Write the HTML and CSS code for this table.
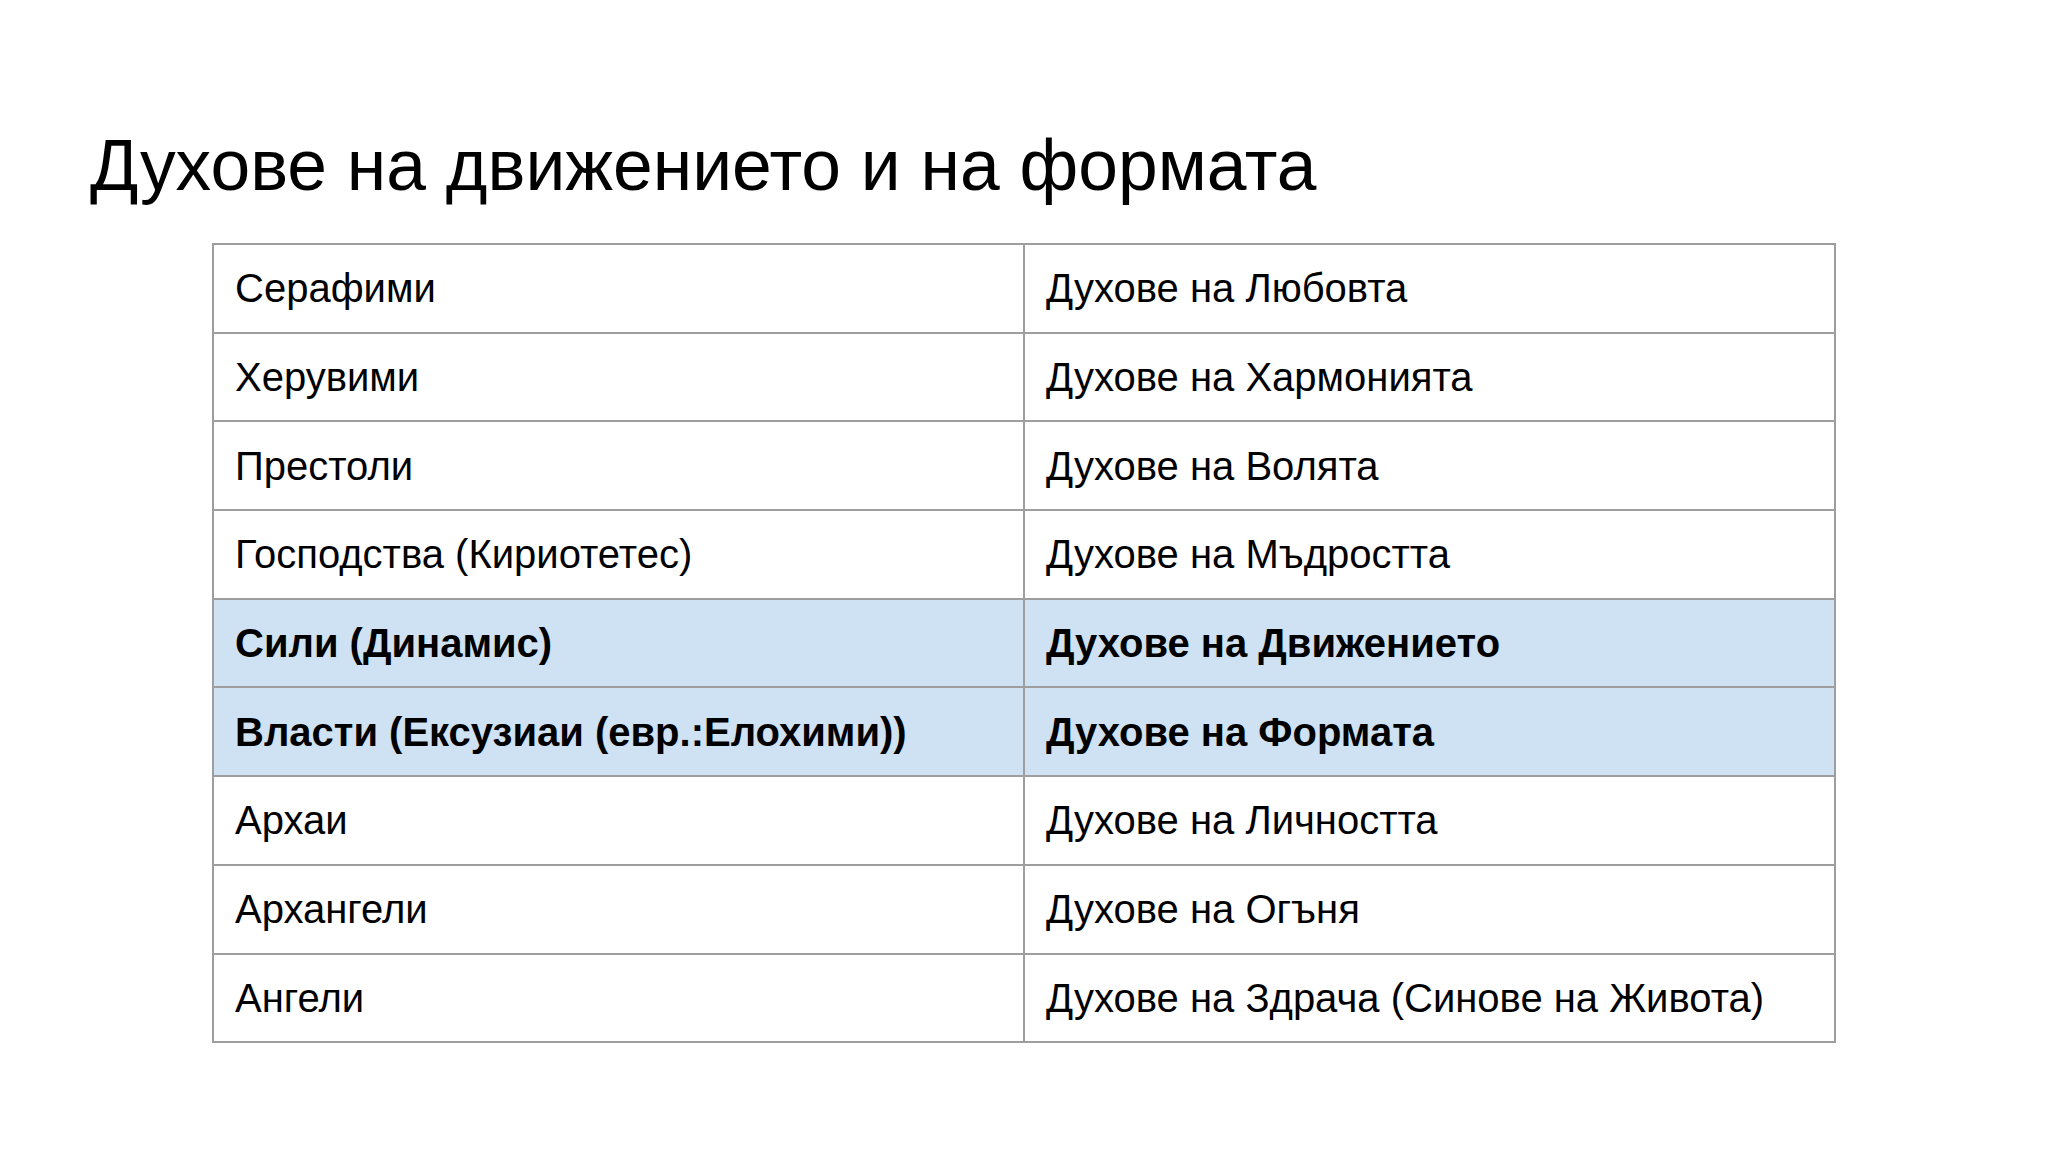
FILE: index.html
```html
<!DOCTYPE html>
<html lang="bg">
<head>
<meta charset="utf-8">
<title>Духове на движението и на формата</title>
<link rel="stylesheet" href="styles.css">
</head>
<body>
<main class="slide">
  <h1 class="title">Духове на движението и на формата</h1>
  <table class="hierarchy">
    <tbody>
      <tr><td>Серафими</td><td>Духове на Любовта</td></tr>
      <tr><td>Херувими</td><td>Духове на Хармонията</td></tr>
      <tr><td>Престоли</td><td>Духове на Волята</td></tr>
      <tr><td>Господства (Кириотетес)</td><td>Духове на Мъдростта</td></tr>
      <tr class="hl"><td>Сили (Динамис)</td><td>Духове на Движението</td></tr>
      <tr class="hl"><td>Власти (Ексузиаи (евр.:Елохими))</td><td>Духове на Формата</td></tr>
      <tr><td>Архаи</td><td>Духове на Личността</td></tr>
      <tr><td>Архангели</td><td>Духове на Огъня</td></tr>
      <tr><td>Ангели</td><td>Духове на Здрача (Синове на Живота)</td></tr>
    </tbody>
  </table>
</main>
</body>
</html>
```

FILE: styles.css
```css
html, body {
  margin: 0;
  padding: 0;
  background: #ffffff;
}

body {
  width: 2048px;
  height: 1152px;
  overflow: hidden;
  font-family: "Liberation Sans", Arial, sans-serif;
  color: #000000;
}

.slide {
  padding-top: 124px;
}

.title {
  margin: 0 0 36px 90px;
  font-size: 71.4px;
  font-weight: normal;
  line-height: 83px;
  white-space: nowrap;
}

.hierarchy {
  margin-left: 212px;
  width: 1624px;
  border-collapse: collapse;
  table-layout: fixed;
}

.hierarchy td {
  border: 2px solid #9e9e9e;
  height: 86.7px;
  padding: 0 0 0 21px;
  font-size: 40px;
  line-height: 44px;
  vertical-align: middle;
  white-space: nowrap;
}

.hierarchy tr.hl td {
  background: #cfe2f3;
  font-weight: bold;
}
```
